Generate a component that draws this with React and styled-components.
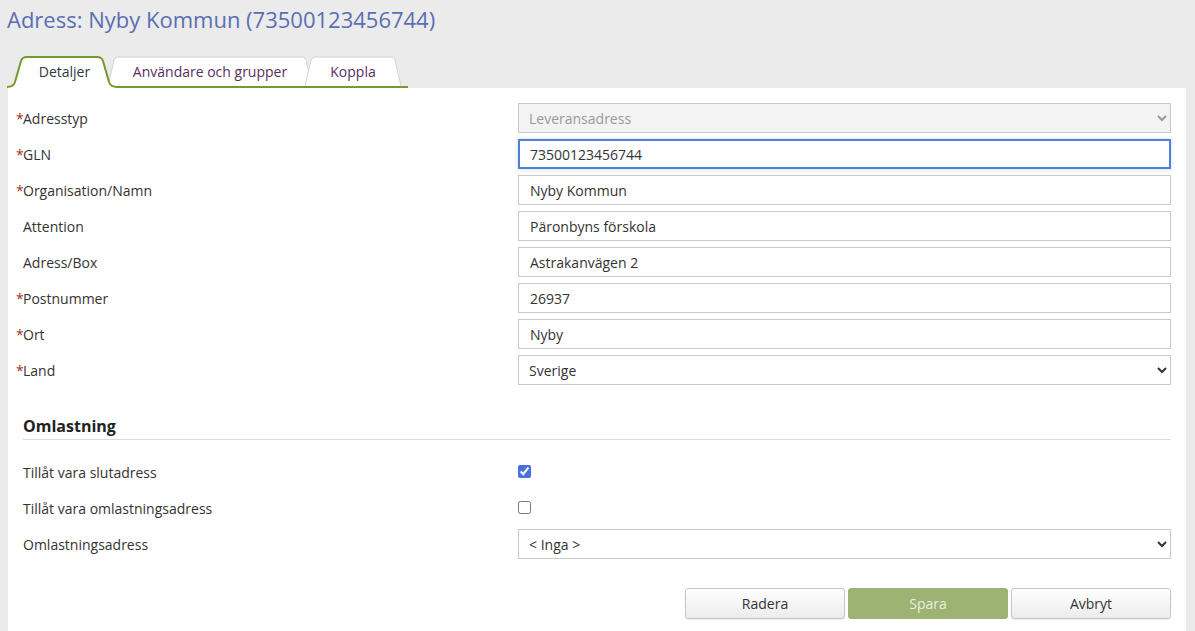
import React from 'react';
import styled, { createGlobalStyle } from 'styled-components';

const GlobalStyle = createGlobalStyle`
    body {
        margin: 0;
        background: #ebebeb;
        font-family: "Open Sans", "Liberation Sans", sans-serif;
        color: #333;
    }
`;

const Page = styled.div`
    padding: 0 9px 0 8px;
`;

const Title = styled.h1`
    margin: 0;
    padding-top: 5px;
    margin-left: -1px;
    font-size: 22px;
    line-height: 28px;
    font-weight: 400;
    color: #5a6fb3;
`;

const TabBar = styled.div`
    display: flex;
    align-items: flex-end;
    width: 401px;
    height: 30px;
    margin: 23px 0 0 -1px;
    border-bottom: 2px solid #74992f;
`;

const TabItem = styled.div`
    position: relative;
    flex: none;
    width: ${p => p.$w}px;
    height: ${p => (p.$active ? 32 : 30)}px;
    margin-bottom: ${p => (p.$active ? -2 : 0)}px;
    margin-left: ${p => p.$shift}px;
    z-index: ${p => (p.$active ? 3 : 1)};
    display: flex;
    align-items: center;
    justify-content: center;
    padding: ${p => (p.$active ? '0 0 2px 5px' : '0')};
    box-sizing: border-box;
    font-size: 14px;
    color: ${p => (p.$active ? '#2f3744' : '#56305f')};
    cursor: pointer;

    svg {
        position: absolute;
        left: 0;
        top: 0;
    }
    span {
        position: relative;
    }
`;

const Tab = ({ w, active, shift = 0, children }) => {
    const shape = active
        ? `M0,31 C5,31 7,29 8,26 L14,5 C15,2 17,1 20,1 L${w - 20},1 C${w - 17},1 ${w - 15},2 ${w - 14},5 L${w - 8},26 C${w - 7},29 ${w - 5},31 ${w},31`
        : `M0,30 L6,4 C7,1.5 9,1 11,1 L${w - 11},1 C${w - 9},1 ${w - 7},1.5 ${w - 6},4 L${w},30`;
    const h = active ? 32 : 30;
    return (
        <TabItem $w={w} $active={active} $shift={shift}>
            <svg width={w} height={h} viewBox={`0 0 ${w} ${h}`}>
                <path d={`${shape} L${w},${h} L0,${h} Z`} fill="#fff" />
                <path d={shape} fill="none" stroke={active ? '#74992f' : '#d2d2d2'} strokeWidth={active ? 2 : 1} />
            </svg>
            <span>{children}</span>
        </TabItem>
    );
};

const Panel = styled.div`
    background: #fff;
    padding: 15px 15px 12px 15px;
    min-height: 530px;
`;

const Row = styled.div`
    display: grid;
    grid-template-columns: 495px 1fr;
    align-items: center;
    height: 30px;
    margin-bottom: 6px;
`;

const Label = styled.label`
    font-size: 14px;
    color: #333;
`;

const Star = styled.span`
    display: inline-block;
    width: 7px;
    margin-left: -7px;
    color: #a4312c;
`;

const Input = styled.input`
    box-sizing: border-box;
    width: 100%;
    height: 30px;
    padding: 0 11px;
    font: 14px "Open Sans", "Liberation Sans", sans-serif;
    color: #333;
    border: ${p => (p.$focus ? '2px solid #4b82d3' : '1px solid #c9c9c9')};
    padding-left: ${p => (p.$focus ? 10 : 11)}px;
    box-shadow: ${p => (p.$focus ? '0 0 4px rgba(75,130,211,0.3)' : 'none')};
    outline: none;
    background: #fff;
`;

const Select = styled.select`
    box-sizing: border-box;
    width: 100%;
    height: 30px;
    padding: 0 6px;
    font: 14px "Open Sans", "Liberation Sans", sans-serif;
    color: #333;
    border: 1px solid #c9c9c9;
    border-radius: 0;
    background: #fff;
    outline: none;

    &:disabled {
        background: #f3f3f3;
        color: #999;
        opacity: 1;
    }
`;

const Check = styled.input`
    margin: 0;
    width: 13px;
    height: 13px;
    accent-color: #4a6fe0;
`;

const SectionHead = styled.h2`
    margin: 30px 0 17px;
    padding-bottom: 2px;
    font-size: 16px;
    line-height: 22px;
    font-weight: 700;
    color: #222;
    border-bottom: 1px solid #dcdcdc;
`;

const Actions = styled.div`
    display: flex;
    justify-content: flex-end;
    gap: 3px;
    margin-top: 29px;
`;

const Button = styled.button`
    width: 160px;
    height: 31px;
    font: 14px "Open Sans", "Liberation Sans", sans-serif;
    border-radius: 3px;
    cursor: pointer;
    border: 1px solid ${p => (p.$primary ? '#9cb374' : '#c6c6c6')};
    background: ${p => (p.$primary ? '#9cb374' : 'linear-gradient(#ffffff, #ececec)')};
    color: ${p => (p.$primary ? '#e9efdd' : '#333')};
    box-shadow: ${p => (p.$primary ? 'none' : '0 1px 1px rgba(0,0,0,0.08)')};
`;

const fields = [
    { label: 'Adresstyp', req: true, kind: 'disabled', value: 'Leveransadress' },
    { label: 'GLN', req: true, kind: 'focus', value: '73500123456744' },
    { label: 'Organisation/Namn', req: true, value: 'Nyby Kommun' },
    { label: 'Attention', value: 'Päronbyns förskola' },
    { label: 'Adress/Box', value: 'Astrakanvägen 2' },
    { label: 'Postnummer', req: true, value: '26937' },
    { label: 'Ort', req: true, value: 'Nyby' },
    { label: 'Land', req: true, kind: 'select', value: 'Sverige' },
];

const Field = ({ kind, value }) => {
    if (kind === 'disabled' || kind === 'select') {
        return (
            <Select disabled={kind === 'disabled'} defaultValue={value}>
                <option>{value}</option>
            </Select>
        );
    }
    return <Input $focus={kind === 'focus'} defaultValue={value} />;
};

const App = () => {
    return (
        <Page>
            <GlobalStyle />
            <Title>Adress: Nyby Kommun (73500123456744)</Title>
            <TabBar>
                <Tab w={110} active>Detaljer</Tab>
                <Tab w={204} shift={-9}>Användare och grupper</Tab>
                <Tab w={96} shift={-7}>Koppla</Tab>
            </TabBar>
            <Panel>
                {fields.map(f => (
                    <Row key={f.label}>
                        <Label>{f.req && <Star>*</Star>}{f.label}</Label>
                        <Field kind={f.kind} value={f.value} />
                    </Row>
                ))}
                <SectionHead>Omlastning</SectionHead>
                <Row>
                    <Label>Tillåt vara slutadress</Label>
                    <div><Check type="checkbox" defaultChecked /></div>
                </Row>
                <Row>
                    <Label>Tillåt vara omlastningsadress</Label>
                    <div><Check type="checkbox" /></div>
                </Row>
                <Row>
                    <Label>Omlastningsadress</Label>
                    <Select defaultValue="< Inga >">
                        <option>{'< Inga >'}</option>
                    </Select>
                </Row>
                <Actions>
                    <Button>Radera</Button>
                    <Button $primary>Spara</Button>
                    <Button>Avbryt</Button>
                </Actions>
            </Panel>
        </Page>
    );
};

export default App;
